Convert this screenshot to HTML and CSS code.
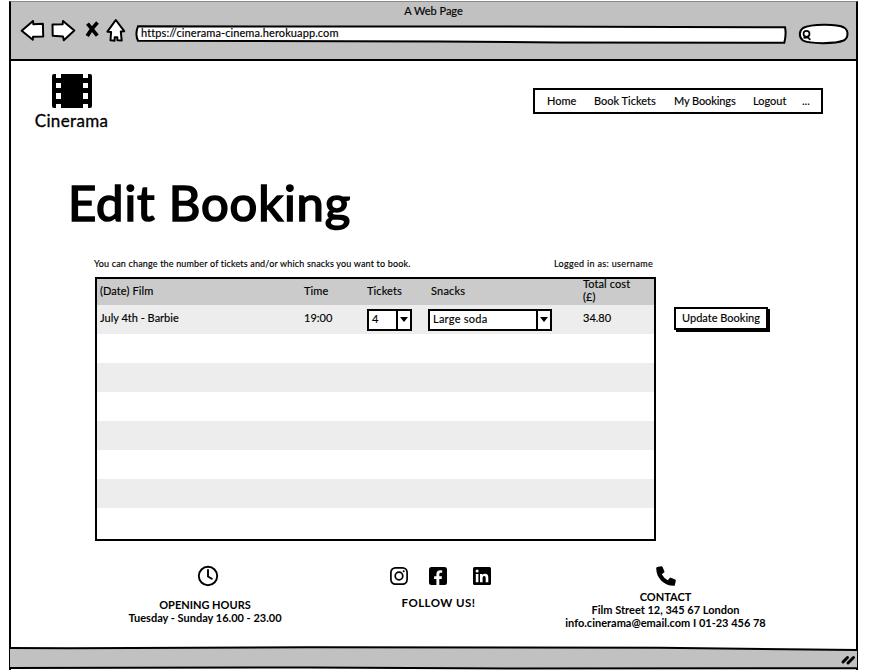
FILE: index.html
```html
<!DOCTYPE html>
<html lang="en">
<head>
<meta charset="utf-8">
<title>Cinerama</title>
<link rel="stylesheet" href="styles.css">
</head>
<body>
<div class="window">
  <header class="chrome">
    <div class="chrome-title"><span>A Web Page</span></div>
    <div class="toolbar">
      <svg class="nav-icons" width="108" height="26" viewBox="19 17 108 26" fill="#fff" stroke="#000" stroke-width="2" stroke-linejoin="round">
        <path d="M21.700 30.800 33 21l.4 3.300 9.500-.5.300 12.700-10.200.3-.2 3Z"/>
        <path d="M52.500 24.600 62.600 24.300 63 21 74.300 30.600 63.800 40.300 63 36.500 52.700 35.800Z"/>
        <path fill="none" stroke-width="3.700" d="M87.500 23.700 97.300 35.700M97.500 22.500Q91 29 87.200 36"/>
        <path d="M115.800 20 124.200 31.200 120.800 31.600 121.700 40.600 117.500 40.300 117.300 37.300H114.700L114.600 40.700 110.500 40.300 111.100 32 107.400 31.700Z"/>
      </svg>
      <div class="address">
        <svg class="outline" width="653" height="20" viewBox="134 24 653 20" fill="#fff" stroke="#000" stroke-width="2"><path d="M138 26.300 500 26.600 785 27.300Q786.500 34 784.300 42.700L560 42.400 440 41.600 138 40.700Q134.800 34 138 26.300Z"/></svg>
        <span class="t-url">https://cinerama-cinema.herokuapp.com</span>
      </div>
      <svg class="search" width="52" height="22" viewBox="798 23 52 22" fill="#fff" stroke="#000" stroke-width="2"><path d="M803 28C811 23.800 837 23.700 844 27.500 849 30.500 848.500 38 843.500 40.500 836 44 809 44 803 40.500 798.500 37 799 31 803 28Z"/><g stroke-width="1.700"><circle cx="806.500" cy="33.800" r="3"/><path fill="none" d="m803.500 37.800 4.500-.5 2.300 2.500"/></g></svg>
    </div>
  </header>

  <main>
    <div class="topbar">
      <div class="brand">
        <svg width="42" height="36" viewBox="0 0 42 36"><path d="M3 1h2v4h5V1h22v4h5V1h2q2 0 2 2v30q0 2-2 2h-2v-4h-5v4H10v-4H5v4H3q-2 0-2-2V3q0-2 2-2Z"/><path fill="#fff" d="M5 10h5v5H5Zm27 0h5v5h-5ZM5 20h5v6H5Zm27 0h5v6h-5Z"/></svg>
        <span class="t-brand">Cinerama</span>
      </div>
      <nav class="menu"><a class="m1">Home</a><a class="m2">Book Tickets</a><a class="m3">My Bookings</a><a class="m4">Logout</a><a class="more">...</a></nav>
    </div>
    <h1><span>Edit Booking</span></h1>
    <div class="notes"><span class="t-note">You can change the number of tickets and/or which snacks you want to book.</span><span class="t-user">Logged in as: username</span></div>
    <div class="booking">
      <div class="table">
        <div class="row head"><span>(Date) Film</span><span>Time</span><span>Tickets</span><span class="t-snacks">Snacks</span><span class="cost">Total cost<br>(£)</span></div>
        <div class="row shade"><span>July 4th - Barbie</span><span>19:00</span>
          <div class="select qty"><span>4</span><i><svg width="8" height="5"><path d="M0 0h8L4 5Z"/></svg></i></div>
          <div class="select snack"><span>Large soda</span><i><svg width="8" height="5"><path d="M0 0h8L4 5Z"/></svg></i></div>
          <span>34.80</span></div>
        <div class="row"></div><div class="row shade"></div><div class="row"></div><div class="row shade"></div><div class="row"></div><div class="row shade"></div><div class="row last"></div>
      </div>
      <button class="update"><span>Update Booking</span></button>
    </div>
    <footer>
      <section class="hours">
        <svg width="22" height="22" viewBox="0 0 22 22" fill="none" stroke="#000" stroke-width="1.900"><circle cx="11" cy="11" r="9.200"/><path d="M11 5v6.500l3.800 2.300" stroke-linecap="round"/></svg>
        <p class="t-open">OPENING HOURS</p><p class="t-days">Tuesday - Sunday 16.00 - 23.00</p>
      </section>
      <section class="social">
        <div class="social-icons">
          <svg width="18" height="18" viewBox="0 0 18 18" fill="none" stroke="#000" stroke-width="1.700"><rect x=".9" y=".9" width="16.200" height="16.200" rx="4.500"/><circle cx="9" cy="9" r="3.800"/><circle cx="13.700" cy="4.300" r="1" fill="#000" stroke="none"/></svg>
          <svg width="18" height="18" viewBox="0 0 18 18"><rect width="18" height="18" rx="2.500"/><path fill="#fff" d="M7.400 18v-6.100H5.100V9.300h2.300V7.200c0-2.600 1.500-4 3.900-4l1.900.2v2.300h-1.300c-1.200 0-1.600.7-1.600 1.400v2.200h2.700l-.4 2.600h-2.300V18Z"/></svg>
          <svg width="18" height="18" viewBox="0 0 18 18"><rect width="18" height="18" rx="1.500"/><g fill="#fff"><circle cx="4.100" cy="4.100" r="1.500"/><path d="M2.800 6.900h2.600v8.400H2.800ZM7 6.900h2.500V8c.5-.8 1.400-1.300 2.500-1.300 2.600 0 3.300 1.600 3.300 4v4.600h-2.600v-4.100c0-1.100-.1-2.300-1.500-2.300s-1.600 1.100-1.600 2.200v4.200H7Z"/></g></svg>
        </div>
        <p class="t-follow">FOLLOW US!</p>
      </section>
      <section class="contact">
        <svg width="20" height="20" viewBox="0 0 20 20"><path d="M1.200 1.100 5.300.2q.8-.1 1.200.7l1.900 4.300q.2.700-.3 1.200L5.800 8.300a14 14 0 0 0 6 6l1.900-2.300q.5-.6 1.200-.3l4.300 1.800q.8.400.6 1.200l-.9 4.200q-.3.900-1.100.9C8 19.800.2 12 .2 2.200q0-.9 1-1.100Z"/></svg>
        <p class="t-contact">CONTACT</p><p class="t-street">Film Street 12, 345 67 London</p><p class="t-mail">info.cinerama@email.com I 01-23 456 78</p>
      </section>
    </footer>
  </main>
  <div class="statusbar">
    <svg width="849" height="24" viewBox="0 0 849 24"><path fill="#c1c1c1" d="M1 2 300 1 650 2 848 4V22H1Z"/><path fill="none" stroke="#000" stroke-width="2" d="M1 2 60 2.300 300 1.200 650 1.700 848 4M0 22 300 21.500 500 22.500 849 22.200"/><path fill="none" stroke="#000" stroke-width="3" stroke-linecap="round" d="m834 16 4.500-4.500M839 17l5.500-5.500"/></svg>
  </div>
</div>
</body>
</html>
```
FILE: styles.css
```css
* { box-sizing: border-box; }
body { margin: 0; width: 877px; height: 670px; overflow: hidden; background: #fff; color: #000; font: 11px/13px Lato, "Open Sans", sans-serif; font-variant-ligatures: none; -webkit-text-stroke: .15px #000; }
svg { display: block; flex: none; }
p { margin: 0; }
span, a, p { white-space: nowrap; }
.window { width: 849px; height: 669px; margin: 1px 0 0 9px; border: solid #000; border-width: 0 2px 0 2px; border-top: 1px solid #888; display: flex; flex-direction: column; }
.chrome { height: 59px; background: #c1c1c1; border-bottom: 2px solid #000; display: flex; flex-direction: column; }
.chrome-title { height: 15px; padding-top: 2px; text-align: center; }
.toolbar { display: flex; padding-left: 8px; }
.nav-icons { margin-right: 7px; }
.address { position: relative; width: 653px; height: 20px; margin-top: 7px; padding: 2px 0 0 7px; letter-spacing: .1px; }
.address span { position: relative; display: block; }
.outline { position: absolute; inset: 0; }
.search { margin: 6px 0 0 11px; }
main { flex: 1; display: flex; flex-direction: column; }
.topbar { display: flex; height: 112px; align-items: flex-start; justify-content: space-between; padding: 12px 33px 0 24px; }
.brand { width: 73px; display: flex; flex-direction: column; align-items: center; font-size: 17px; line-height: 20px; letter-spacing: .35px; -webkit-text-stroke: .3px #000; }
.brand span { margin-top: 2px; }
.menu { width: 290px; height: 26px; margin-top: 15px; border: 2px solid #000; display: flex; align-items: center; padding: 0 0 2px 12px; }
.m1 { width: 47px; }
.m2 { width: 80px; }
.m3 { width: 79px; letter-spacing: -.1px; }
.m4 { width: 49px; }
h1 { margin: 0; height: 84px; padding-left: 57px; font-size: 49px; line-height: 58px; font-weight: 400; letter-spacing: .85px; -webkit-text-stroke: 1.7px #000; }
.notes { display: flex; justify-content: space-between; width: 559px; height: 20px; margin-left: 83px; font-size: 9px; }
.t-note { letter-spacing: .17px; }
.t-user { letter-spacing: .33px; }
.booking { display: flex; margin-left: 84px; align-items: flex-start; }
.table { width: 561px; height: 264px; border: 2px solid #000; }
.row { display: grid; grid-template-columns: 204px 63px 61px 155px 1fr; height: 29px; padding-left: 3px; align-items: center; }
.row > span { position: relative; top: -2px; }
.row > span.t-snacks { left: 3px; letter-spacing: .2px; }
.head { height: 26px; background: #cbcbcb; letter-spacing: .1px; }
.shade { background: #ededed; }
.select { height: 22px; border: 2px solid #000; background: #fff; display: flex; justify-content: space-between; line-height: 15px; padding-left: 3px; letter-spacing: .25px; }
.qty { width: 45px; }
.snack { width: 124px; }
.select i { width: 14px; border-left: 2px solid #000; display: grid; place-items: center; }
.update { width: 94px; height: 23px; margin: 30px 0 0 18px; padding: 0 0 2px; border: 2px solid #000; background: #fff; box-shadow: 2px 2px #000; font: inherit; color: inherit; -webkit-text-stroke: inherit; }
footer { display: grid; grid-template-columns: 388px 80px 1fr; padding: 24px 0 0; font-weight: 700; -webkit-text-stroke: 0; }
footer section { display: flex; flex-direction: column; align-items: center; }
.hours svg { margin: 0 0 11px 6px; }
.social-icons { display: flex; margin: 2px 0 11px 3px; gap: 21px; }
.social-icons svg:last-child { margin-left: 5px; }
.social p { font-size: 11.5px; letter-spacing: .45px; margin-right: 1px; }
.contact { width: 203px; margin-left: 85px; }
.contact svg { margin: 1px 0 4px; }
.statusbar { height: 24px; margin-left: -2px; }
```
